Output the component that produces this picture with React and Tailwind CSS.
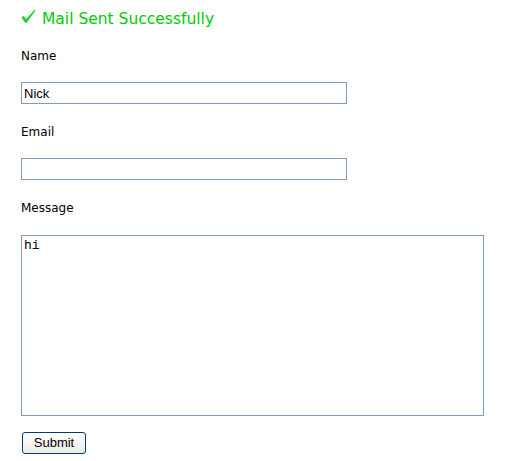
export default function App() {
  return (
    <div className="min-h-[461px] w-[522px] bg-white pl-[21px] pt-[8px] font-['DejaVu_Sans',sans-serif]">
      <div className="flex h-[22px] items-center">
        <svg width="16" height="16" viewBox="0 0 16 16" className="mt-[-4px]">
          <path d="M0.5 8.5 L2.8 6.8 L5 10.2 L13.6 0.8 L14.4 1.6 L5.6 13.8 L4.2 13.8 Z" fill="#22cc22" />
        </svg>
        <span className="ml-[5px] text-[15.5px] leading-[20px] text-[#00cc00]">Mail Sent Successfully</span>
      </div>
      <form className="block" onSubmit={(e) => e.preventDefault()}>
        <div className="mt-[18px] text-[12px] leading-[16px] text-black">Name</div>
        <input
          defaultValue="Nick"
          className="mt-[18px] block h-[22px] w-[326px] border border-[#7f9db9] px-[2px] font-['Liberation_Sans',sans-serif] text-[13px] text-black outline-none"
        />
        <div className="mt-[20px] text-[12px] leading-[16px] text-black">Email</div>
        <input
          className="mt-[18px] block h-[22px] w-[326px] border border-[#7f9db9] px-[2px] font-['Liberation_Sans',sans-serif] text-[13px] text-black outline-none"
        />
        <div className="mt-[20px] text-[12px] leading-[16px] text-black">Message</div>
        <textarea
          defaultValue="hi"
          className="mt-[19px] block h-[181px] w-[463px] resize-none border border-[#7f9db9] px-[2px] py-[2px] font-['Liberation_Mono',monospace] text-[13px] leading-[15px] text-black outline-none"
        />
        <button
          type="submit"
          className="mt-[16px] ml-[1px] block h-[22px] w-[64px] rounded-[3px] border border-[#003c74] bg-gradient-to-b from-white to-[#ecebe6] font-['Liberation_Sans',sans-serif] text-[13px] leading-[18px] text-black"
        >
          Submit
        </button>
      </form>
    </div>
  );
}
